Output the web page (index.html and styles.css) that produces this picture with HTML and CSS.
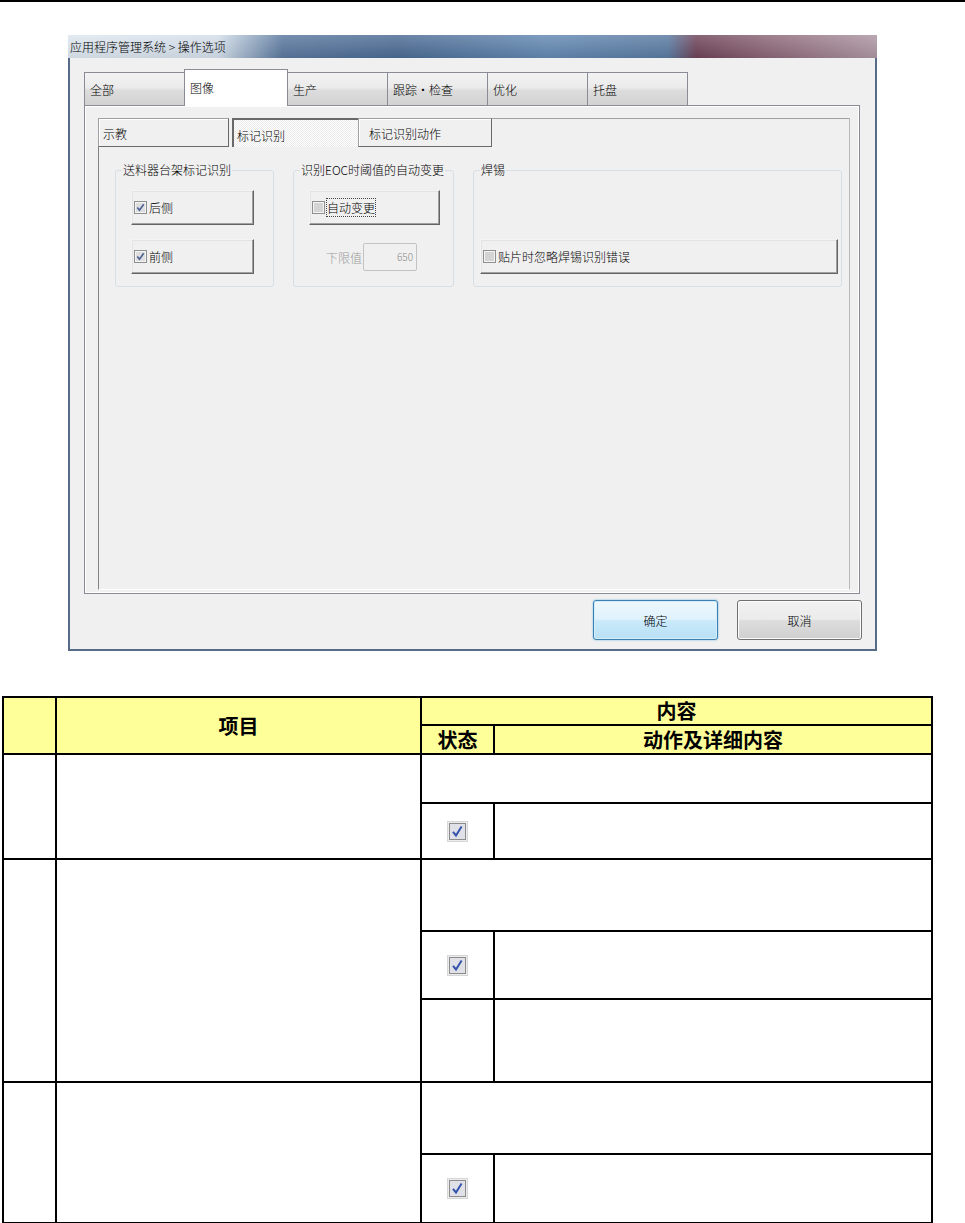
FILE: index.html
```
<!DOCTYPE html>
<html lang="zh-CN">
<head>
    <meta charset="UTF-8">
    <meta name="viewport" content="width=device-width, initial-scale=1.0">
    <title>操作选项</title>
    <link rel="stylesheet" href="styles.css">
</head>
<body>
    <div class="rule"></div>

    <div class="dialog">
        <div class="titlebar">应用程序管理系统 &gt; 操作选项</div>
        <div class="dialog-body">
            <div class="tabs">
                <div class="tab">全部</div>
                <div class="tab active">图像</div>
                <div class="tab">生产</div>
                <div class="tab">跟踪・检查</div>
                <div class="tab">优化</div>
                <div class="tab">托盘</div>
            </div>
            <div class="panel">
                <div class="subpanel">
                    <div class="subtabs">
                        <div class="subtab first">示教</div>
                        <div class="subtab active">标记识别</div>
                        <div class="subtab last">标记识别动作</div>
                        <div class="subtab-fill"></div>
                    </div>
                    <div class="groups">
                        <div class="group g-feeder">
                            <div class="group-title">送料器台架标记识别</div>
                            <div class="group-body">
                                <div class="check-btn">
                                    <svg class="cb" width="13" height="13" viewBox="0 0 13 13"><rect x=".5" y=".5" width="12" height="12" fill="#f4f4f4" stroke="#8e8f8f"/><rect x="2" y="2" width="9" height="9" fill="#dedede"/><path d="M3.3 6.4l2.2 2.7 4.2-5.8" fill="none" stroke="#4b5f95" stroke-width="1.6"/></svg>
                                    <span>后侧</span>
                                </div>
                                <div class="check-btn">
                                    <svg class="cb" width="13" height="13" viewBox="0 0 13 13"><rect x=".5" y=".5" width="12" height="12" fill="#f4f4f4" stroke="#8e8f8f"/><rect x="2" y="2" width="9" height="9" fill="#dedede"/><path d="M3.3 6.4l2.2 2.7 4.2-5.8" fill="none" stroke="#4b5f95" stroke-width="1.6"/></svg>
                                    <span>前侧</span>
                                </div>
                            </div>
                        </div>
                        <div class="group g-eoc">
                            <div class="group-title">识别EOC时阈值的自动变更</div>
                            <div class="group-body">
                                <div class="check-btn">
                                    <svg class="cb" width="13" height="13" viewBox="0 0 13 13"><rect x=".5" y=".5" width="12" height="12" fill="#f4f4f4" stroke="#8e8f8f"/><rect x="2" y="2" width="9" height="9" fill="#d4d4d4"/></svg>
                                    <span class="focus">自动变更</span>
                                </div>
                                <div class="limit">
                                    <span class="limit-label">下限值</span>
                                    <span class="limit-input">650</span>
                                </div>
                            </div>
                        </div>
                        <div class="group g-solder">
                            <div class="group-title">焊锡</div>
                            <div class="group-body">
                                <div class="check-btn">
                                    <svg class="cb" width="13" height="13" viewBox="0 0 13 13"><rect x=".5" y=".5" width="12" height="12" fill="#f4f4f4" stroke="#8e8f8f"/><rect x="2" y="2" width="9" height="9" fill="#d4d4d4"/></svg>
                                    <span>贴片时忽略焊锡识别错误</span>
                                </div>
                            </div>
                        </div>
                    </div>
                </div>
            </div>
            <div class="actions">
                <button class="btn btn-ok">确定</button>
                <button class="btn">取消</button>
            </div>
        </div>
    </div>

    <table class="spec">
        <colgroup>
            <col class="c-no">
            <col class="c-item">
            <col class="c-state">
            <col class="c-detail">
        </colgroup>
        <thead>
            <tr class="h28"><th rowspan="2"></th><th rowspan="2">项目</th><th colspan="2">内容</th></tr>
            <tr class="h29"><th>状态</th><th>动作及详细内容</th></tr>
        </thead>
        <tbody>
            <tr class="h49"><td rowspan="2"></td><td rowspan="2"></td><td colspan="2"></td></tr>
            <tr class="h56">
                <td class="state"><svg width="21" height="21" viewBox="0 0 21 21"><rect x=".5" y=".5" width="20" height="20" fill="#ececec" stroke="#d6d6d6"/><rect x="2.5" y="2.5" width="16" height="16" fill="#dfe1e6" stroke="#8c8c8c"/><path d="M6 10.8l3 3.7 5.6-9" fill="none" stroke="#3453ad" stroke-width="2"/></svg></td>
                <td></td>
            </tr>

            <tr class="h72"><td rowspan="3"></td><td rowspan="3"></td><td colspan="2"></td></tr>
            <tr class="h68">
                <td class="state"><svg width="21" height="21" viewBox="0 0 21 21"><rect x=".5" y=".5" width="20" height="20" fill="#ececec" stroke="#d6d6d6"/><rect x="2.5" y="2.5" width="16" height="16" fill="#dfe1e6" stroke="#8c8c8c"/><path d="M6 10.8l3 3.7 5.6-9" fill="none" stroke="#3453ad" stroke-width="2"/></svg></td>
                <td></td>
            </tr>
            <tr class="h83"><td></td><td></td></tr>

            <tr class="h72"><td rowspan="2"></td><td rowspan="2"></td><td colspan="2"></td></tr>
            <tr class="h69">
                <td class="state"><svg width="21" height="21" viewBox="0 0 21 21"><rect x=".5" y=".5" width="20" height="20" fill="#ececec" stroke="#d6d6d6"/><rect x="2.5" y="2.5" width="16" height="16" fill="#dfe1e6" stroke="#8c8c8c"/><path d="M6 10.8l3 3.7 5.6-9" fill="none" stroke="#3453ad" stroke-width="2"/></svg></td>
                <td></td>
            </tr>
        </tbody>
    </table>
</body>
</html>
```

FILE: styles.css
```
body {
    margin: 0;
    background: #fff;
    font-family: "Noto Sans CJK SC", "Liberation Sans", sans-serif;
    font-size: 12px;
    color: #000;
}
.rule {
    height: 2px;
    background: #000;
}

/* dialog window */
.dialog {
    width: 809px;
    margin: 33px 0 0 68px;
    font-weight: 300;
}
.titlebar {
    height: 23px;
    line-height: 23px;
    padding-left: 2px;
    background:
        linear-gradient(rgba(255, 255, 255, 0.18), rgba(0, 0, 0, 0.06)),
        linear-gradient(90deg, #dde6ef 0, #d3dee9 150px, #a3b6cc 175px, #58769c 215px, #4a6a92 330px, #6287b1 480px, #58799f 600px, #6d4258 628px, #8b6575 700px, #ab95a1 809px);
}
.dialog-body {
    background: #f0f0f0;
    border: 2px solid #566b86;
    border-top: none;
    padding: 11px 13px 9px 14px;
}

/* outer tabs */
.tabs {
    display: flex;
    align-items: flex-end;
    height: 36px;
}
.tab {
    width: 101px;
    height: 33px;
    box-sizing: border-box;
    margin-right: -1px;
    padding: 10px 0 0 5px;
    line-height: 14px;
    border: 1px solid #898c95;
    border-bottom: none;
    background: linear-gradient(#f2f2f2, #ebebeb 45%, #dcdcdc 55%, #d2d2d2);
}
.tab.active {
    width: 104px;
    height: 37px;
    margin-bottom: -1px;
    padding-top: 11px;
    background: #fff;
    position: relative;
    z-index: 1;
}
.panel {
    width: 776px;
    height: 489px;
    box-sizing: border-box;
    display: flex;
    flex-direction: column;
    padding: 12px 9px 3px 13px;
    border: 1px solid #898c95;
    box-shadow: inset 0 0 0 1px #fff;
}

/* inner tabs */
.subpanel {
    flex: 1;
    border-left: 1px solid #828282;
    border-right: 1px solid #b9b9b9;
    border-bottom: 1px solid #fff;
}
.subtabs {
    display: flex;
    height: 29px;
    margin-left: -1px;
}
.subtab {
    box-sizing: border-box;
    height: 29px;
    padding: 8px 0 0 4px;
    line-height: 14px;
    border: 1px solid;
    border-color: #a0a0a0 #696969 #696969 #a0a0a0;
    box-shadow: inset 1px 1px #fff;
}
.subtab.first {
    width: 131px;
}
.subtab.active {
    width: 126px;
    margin-left: 3px;
    padding: 9px 0 0 3px;
    border-width: 2px 0 0 2px;
    border-color: #696969;
    box-shadow: none;
    background: repeating-conic-gradient(#fff 0 25%, #ebebeb 0 50%) 0 0 / 2px 2px;
}
.subtab.last {
    width: 134px;
    padding-left: 10px;
}
.subtab-fill {
    flex: 1;
    border-top: 1px solid #a0a0a0;
}

/* group boxes */
.groups {
    display: flex;
    align-items: stretch;
    padding: 23px 0 0 16px;
}
.group {
    display: flex;
    flex-direction: column;
    box-sizing: border-box;
    border: 1px solid #d5dfe5;
    border-radius: 3px;
}
.group-title {
    align-self: flex-start;
    margin: -8px 0 0 6px;
    padding: 0 1px;
    line-height: 14px;
    background: #f0f0f0;
}
.group-body {
    padding: 13px 0 12px 15px;
}
.g-feeder {
    width: 159px;
}
.g-eoc {
    width: 161px;
    margin-left: 19px;
}
.g-solder {
    width: 369px;
    margin-left: 19px;
}
.g-solder .group-body {
    padding: 62px 0 0 6px;
}

.check-btn {
    display: flex;
    align-items: center;
    gap: 2px;
    width: 123px;
    height: 35px;
    box-sizing: border-box;
    padding-left: 2px;
    border: 1px solid;
    border-color: #f4f4f4 #646464 #646464 #f4f4f4;
    box-shadow: inset -1px -1px #a0a0a0, inset 1px 1px #e3e3e3;
    background: #f0f0f0;
}
.check-btn + .check-btn {
    margin-top: 14px;
}
.g-eoc .check-btn {
    width: 131px;
}
.g-solder .check-btn {
    width: 358px;
}
.cb {
    flex: none;
}
.focus {
    outline: 1px dotted #444;
}
.limit {
    display: flex;
    align-items: center;
    margin: 18px 0 0 17px;
}
.limit-label {
    color: #9a9a9a;
    width: 37px;
}
.limit-input {
    width: 54px;
    height: 28px;
    box-sizing: border-box;
    border: 1px solid #c3c3c3;
    border-radius: 2px;
    padding-right: 3px;
    text-align: right;
    line-height: 26px;
    font-size: 10px;
    color: #8a8a8a;
}

/* dialog buttons */
.actions {
    display: flex;
    justify-content: flex-end;
    gap: 19px;
    margin-top: 6px;
}
.btn {
    width: 125px;
    height: 40px;
    font-family: inherit;
    font-weight: 300;
    font-size: 12px;
    color: #000;
    border: 1px solid #707070;
    border-radius: 3px;
    background: linear-gradient(#f2f2f2, #ebebeb 48%, #dddddd 52%, #cfcfcf);
    box-shadow: inset 0 0 0 1px #fcfcfc;
}
.btn-ok {
    border-color: #3c7fb1;
    background: linear-gradient(#eef8fd, #e0f2fc 48%, #c9eafb 52%, #b9e0f5);
    box-shadow: inset 0 0 0 1px #d2eefb, 0 0 2px #5fb3e4;
}

/* description table */
.spec {
    margin: 45px 0 0 2px;
    width: 929px;
    table-layout: fixed;
    border-collapse: collapse;
}
.spec th, .spec td {
    border: 2px solid #000;
    padding: 0;
}
.spec th {
    background: #ffff99;
    font-size: 20px;
    font-weight: bold;
    line-height: 22px;
    text-align: center;
}
.spec td.state {
    text-align: center;
    vertical-align: middle;
}
.spec td.state svg {
    display: block;
    margin: 0 auto;
}
.c-no { width: 53px; }
.c-item { width: 365px; }
.c-state { width: 73px; }
.c-detail { width: 438px; }
.h28 { height: 28px; }
.h29 { height: 29px; }
.h49 { height: 49px; }
.h56 { height: 56px; }
.h68 { height: 68px; }
.h69 { height: 69px; }
.h72 { height: 72px; }
.h83 { height: 83px; }
```
